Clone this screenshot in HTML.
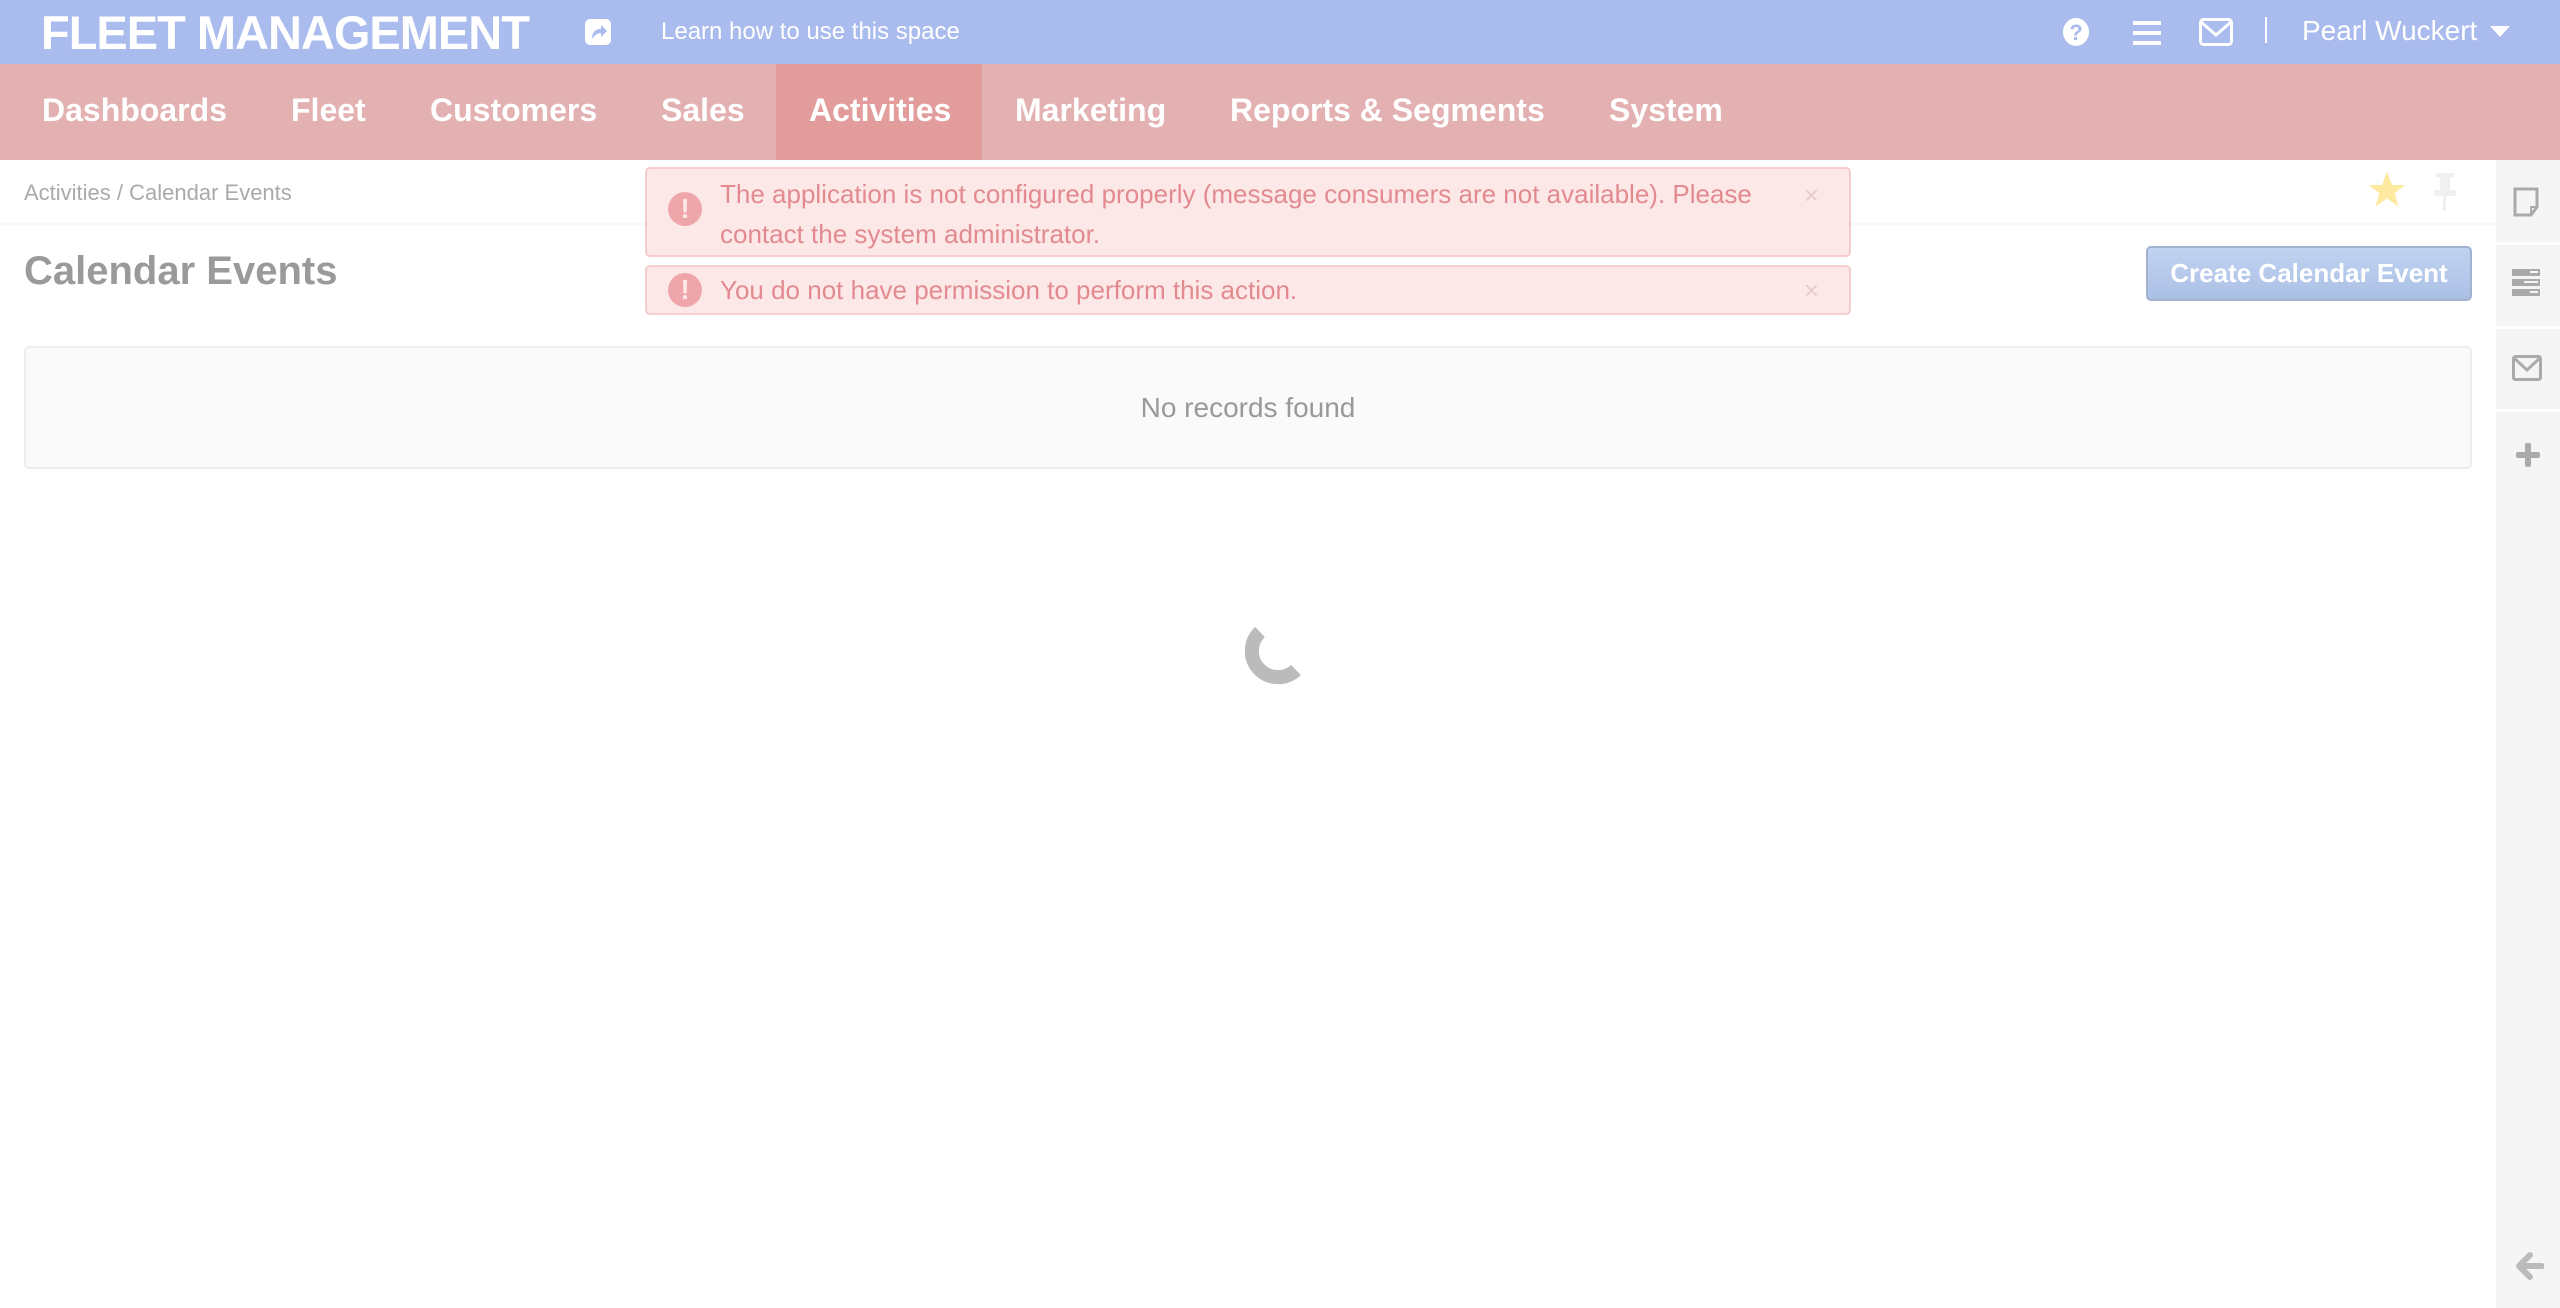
<!DOCTYPE html>
<html><head><meta charset="utf-8"><style>
*{margin:0;padding:0;box-sizing:border-box}
body{width:2560px;height:1308px;overflow:hidden;background:#fff;font-family:"Liberation Sans",Arial,sans-serif;position:relative}
.abs{position:absolute}
#top{left:0;top:0;width:2560px;height:64px;background:#aabbed;color:#fff}
#nav{left:0;top:64px;width:2560px;height:96px;background:#e3b1b1}
.nv{position:absolute;top:0;height:96px;line-height:92px;color:#fff;font-weight:bold;font-size:32px}
#side{left:2496px;top:160px;width:64px;height:1148px;background:#f5f5f5}
.sep{position:absolute;left:0;width:64px;height:3px;background:#fff}
.alert{position:absolute;left:645px;width:1206px;background:#fde8e8;border:2px solid #f6cccc;border-radius:5px;color:#e28a90;font-size:26px;line-height:40px}
.ico{position:absolute;left:21px;width:34px;height:34px;border-radius:50%;background:#eea6ab;color:#fde8e8;font-weight:bold;text-align:center;line-height:34px;font-size:28px}
.x{position:absolute;right:30px;color:#e8cccc;font-size:26px}
</style></head><body>
<div id="top" class="abs">
 <div class="abs" style="left:41px;top:5px;font-size:47px;font-weight:bold;letter-spacing:-1px">FLEET MANAGEMENT</div>
 <svg class="abs" style="left:584px;top:18px" width="28" height="28" viewBox="0 0 28 28"><rect x="1" y="1" width="26" height="26" rx="5" fill="#fff"/><path d="M8 21 Q8 11 17 11 L17 7 L23 13 L17 19 L17 15 Q12 15 8 21Z" fill="#aabbed"/></svg>
 <div class="abs" style="left:661px;top:18px;font-size:24px">Learn how to use this space</div>
 <svg class="abs" style="left:2062px;top:17px" width="28" height="30" viewBox="0 0 28 30"><ellipse cx="14" cy="15" rx="13" ry="14" fill="#fff"/><text x="14" y="23" text-anchor="middle" font-size="22" font-weight="bold" fill="#aabbed" font-family="Liberation Sans">?</text></svg>
 <svg class="abs" style="left:2133px;top:21px" width="28" height="24"><rect y="0" width="28" height="4" fill="#fff"/><rect y="10" width="28" height="4" fill="#fff"/><rect y="20" width="28" height="4" fill="#fff"/></svg>
 <svg class="abs" style="left:2199px;top:18px" width="34" height="28"><rect x="1.5" y="1.5" width="31" height="25" rx="3" fill="none" stroke="#fff" stroke-width="3"/><path d="M2 4 L17 17 L32 4" fill="none" stroke="#fff" stroke-width="3"/></svg>
 <div class="abs" style="left:2265px;top:17px;width:2px;height:26px;background:#fff"></div>
 <div class="abs" style="left:2302px;top:15px;font-size:28px">Pearl Wuckert</div>
 <svg class="abs" style="left:2490px;top:26px" width="20" height="12"><path d="M0 0 H20 L10 11Z" fill="#fff"/></svg>
</div>
<div id="nav" class="abs">
 <div class="abs" style="left:776px;top:0;width:206px;height:96px;background:#e39c9c"></div>
 <div class="nv" style="left:42px">Dashboards</div>
 <div class="nv" style="left:291px">Fleet</div>
 <div class="nv" style="left:430px">Customers</div>
 <div class="nv" style="left:661px">Sales</div>
 <div class="nv" style="left:809px">Activities</div>
 <div class="nv" style="left:1015px">Marketing</div>
 <div class="nv" style="left:1230px">Reports &amp; Segments</div>
 <div class="nv" style="left:1609px">System</div>
</div>
<div class="abs" style="left:24px;top:180px;font-size:22px;color:#aaa">Activities / Calendar Events</div>
<div class="abs" style="left:0;top:223px;width:2496px;height:2px;background:#f7f7f7"></div>
<svg class="abs" style="left:2367px;top:170px" width="40" height="40" viewBox="0 0 24 24"><path d="M12 1 L15 9 L23 9 L16.5 14 L19 22 L12 17 L5 22 L7.5 14 L1 9 L9 9Z" fill="#fde9a0"/></svg>
<svg class="abs" style="left:2433px;top:173px" width="24" height="40"><rect x="3" y="0" width="18" height="4" fill="#f0f0f0"/><rect x="7" y="3" width="10" height="15" fill="#f0f0f0"/><rect x="1" y="17" width="22" height="6" fill="#f0f0f0"/><rect x="10" y="22" width="3" height="16" fill="#f0f0f0"/></svg>
<div class="abs" style="left:24px;top:249px;font-size:40px;font-weight:bold;color:#9a9a9a">Calendar Events</div>
<div class="abs" style="left:2146px;top:246px;width:326px;height:55px;border:2px solid #a3b3cf;border-radius:5px;background:linear-gradient(#c0d3f1,#acc0e6);color:#fff;font-weight:bold;font-size:26px;text-align:center;line-height:50px">Create Calendar Event</div>
<div class="abs" style="left:24px;top:346px;width:2448px;height:123px;background:#fafafa;border:2px solid #eee;border-radius:5px;text-align:center;line-height:119px;font-size:28px;color:#999">No records found</div>
<div class="alert" style="top:167px;height:90px;padding:5px 0 0 73px"><div class="ico" style="top:23px">!</div>The application is not configured properly (message consumers are not available). Please<br>contact the system administrator.<span class="x" style="top:6px">×</span></div>
<div class="alert" style="top:265px;height:50px;padding:3px 0 0 73px"><div class="ico" style="top:6px">!</div>You do not have permission to perform this action.<span class="x" style="top:3px">×</span></div>
<svg class="abs" style="left:1243px;top:626px" width="62" height="62" viewBox="0 0 62 62"><path d="M17 6 A26 26 0 1 0 53 44" fill="none" stroke="#bbb" stroke-width="14"/></svg>
<div id="side" class="abs">
 <div class="sep" style="top:82px"></div><div class="sep" style="top:166px"></div><div class="sep" style="top:249px"></div>
 <svg class="abs" style="left:17px;top:27px" width="26" height="30"><path d="M2 2 H24 V20 L18 28 H2Z" fill="none" stroke="#aaa" stroke-width="3"/><path d="M24 20 H18 V28" fill="none" stroke="#aaa" stroke-width="2"/></svg>
 <svg class="abs" style="left:16px;top:109px" width="28" height="28"><rect y="0" width="28" height="7" fill="#aaa"/><rect y="10" width="28" height="7" fill="#aaa"/><rect y="20" width="28" height="7" fill="#aaa"/><rect x="18" y="2" width="8" height="2" fill="#f5f5f5"/><rect x="12" y="12" width="14" height="2" fill="#f5f5f5"/><rect x="18" y="22" width="8" height="2" fill="#f5f5f5"/></svg>
 <svg class="abs" style="left:16px;top:195px" width="30" height="26"><rect x="1.5" y="1.5" width="27" height="23" rx="2" fill="none" stroke="#aaa" stroke-width="3"/><path d="M2 3 L15 15 L28 3" fill="none" stroke="#aaa" stroke-width="3"/></svg>
 <svg class="abs" style="left:20px;top:283px" width="24" height="24"><rect x="9" y="0" width="6" height="24" rx="2" fill="#aaa"/><rect x="0" y="9" width="24" height="6" rx="2" fill="#aaa"/></svg>
 <svg class="abs" style="left:20px;top:1092px" width="28" height="28"><path d="M14 3 L3 14 L14 25 M3 14 H26" fill="none" stroke="#bbb" stroke-width="6" stroke-linecap="round" stroke-linejoin="round"/></svg>
</div>
</body></html>
